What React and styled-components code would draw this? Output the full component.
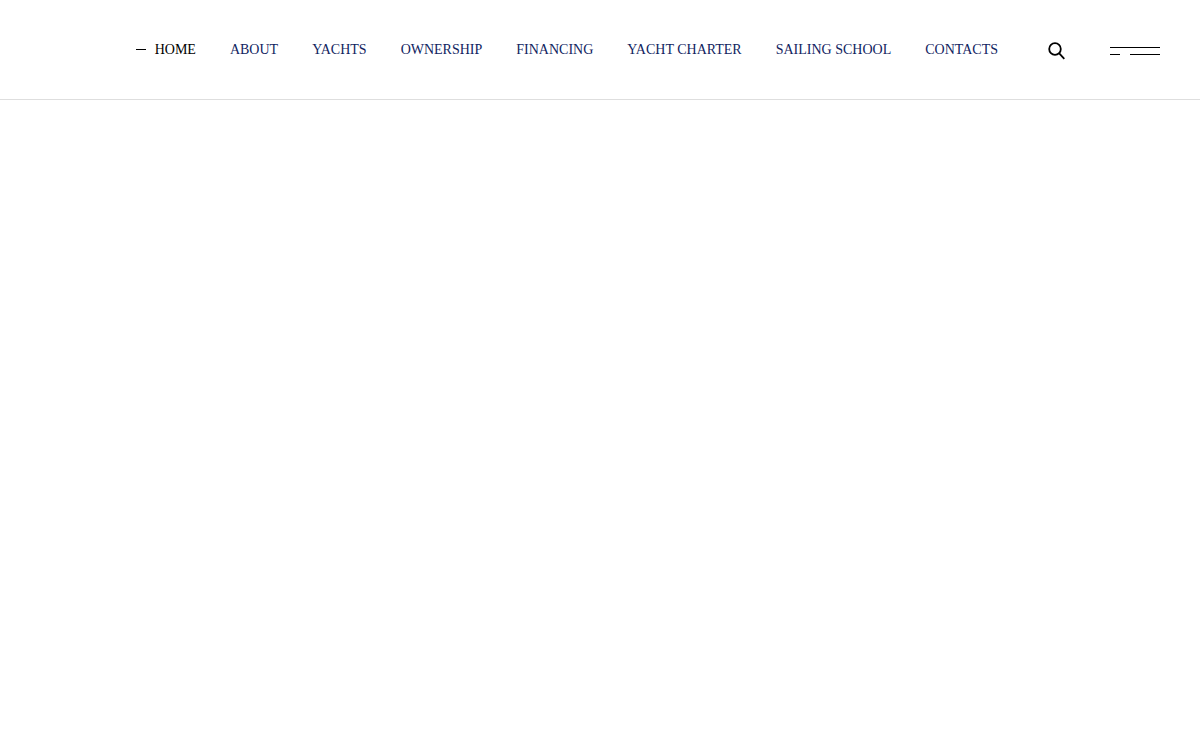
import React from "react";
import styled, { createGlobalStyle } from "styled-components";

const GlobalStyle = createGlobalStyle`
  *, *::before, *::after { box-sizing: border-box; }
  body { margin: 0; background: #fff; font-family: "Liberation Serif", "Times New Roman", serif; }
`;

const Header = styled.header`
  display: flex;
  align-items: center;
  justify-content: flex-end;
  height: 100px;
  padding: 0 40px;
  border-bottom: 1px solid #dedede;
`;

const NavList = styled.ul`
  display: flex;
  gap: 34px;
  margin: 0;
  padding: 0;
  list-style: none;
`;

const NavLink = styled.a`
  display: flex;
  align-items: center;
  gap: 9px;
  font-size: 14px;
  line-height: 24px;
  white-space: nowrap;
  text-decoration: none;
  text-transform: uppercase;
  color: ${(p) => (p.$active ? "#000" : "#11245f")};

  &::before {
    content: "";
    display: ${(p) => (p.$active ? "block" : "none")};
    width: 10px;
    height: 1px;
    background: currentColor;
  }
`;

const IconButton = styled.button`
  display: flex;
  margin: 0;
  padding: 0;
  border: 0;
  background: none;
  color: #000;
  cursor: pointer;
`;

const SearchButton = styled(IconButton)`
  margin: 2px 45px 0 50px;
`;

const MenuButton = styled(IconButton)`
  flex-direction: column;
  gap: 6px;
  width: 50px;
  margin-top: 2px;
`;

const MenuRow = styled.span`
  display: flex;
  gap: 10px;
  width: 100%;
`;

const MenuLine = styled.span`
  flex: ${(p) => (p.$short ? "0 0 10px" : "1")};
  height: 1px;
  background: currentColor;
`;

const items = ["Home", "About", "Yachts", "Ownership", "Financing", "Yacht Charter", "Sailing School", "Contacts"];

export default function App() {
  return (
    <>
      <GlobalStyle />
      <Header>
        <nav aria-label="Main">
          <NavList>
            {items.map((item, i) => (
              <li key={item}>
                <NavLink href="#" $active={i === 0} aria-current={i === 0 ? "page" : undefined}>
                  {item}
                </NavLink>
              </li>
            ))}
          </NavList>
        </nav>
        <SearchButton type="button" aria-label="Search">
          <svg width="17" height="18" viewBox="0 0 17 18" fill="none" stroke="currentColor" aria-hidden="true">
            <circle cx="7" cy="7" r="5.8" strokeWidth="1.8" />
            <path d="M11 11.2L16.3 16.8" strokeWidth="1.8" />
          </svg>
        </SearchButton>
        <MenuButton type="button" aria-label="Open menu">
          <MenuRow>
            <MenuLine />
          </MenuRow>
          <MenuRow>
            <MenuLine $short />
            <MenuLine />
          </MenuRow>
        </MenuButton>
      </Header>
    </>
  );
}
